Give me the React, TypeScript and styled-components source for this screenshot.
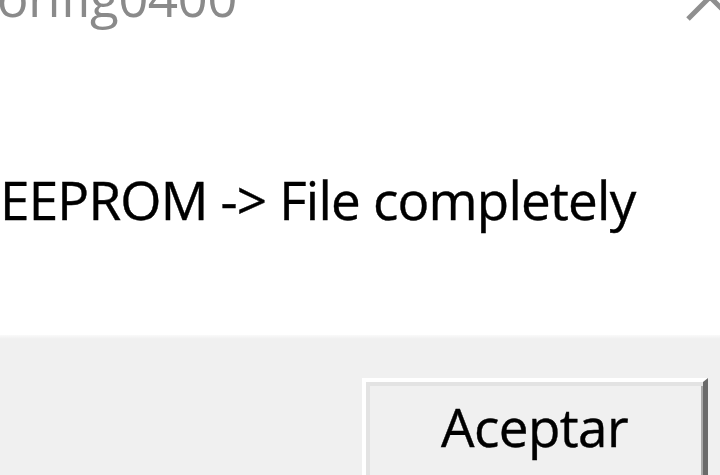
import React from "react";
import styled, { createGlobalStyle } from "styled-components";

const Global = createGlobalStyle`
  html, body {
    margin: 0;
    padding: 0;
    width: 720px;
    height: 475px;
    overflow: hidden;
    background: #ffffff;
  }
  #root {
    width: 720px;
    height: 475px;
    overflow: hidden;
  }
`;

const Dialog = styled.div`
  display: flex;
  flex-direction: column;
  width: 720px;
  height: 475px;
  overflow: hidden;
  font-family: "Open Sans", "Noto Sans", sans-serif;
  font-size: 53px;
  line-height: 53px;
  letter-spacing: -0.6px;
  filter: blur(0.6px);
`;

const Content = styled.div`
  display: flex;
  flex-direction: column;
  flex: none;
  height: 335px;
  background: #ffffff;
`;

const TitleBar = styled.div`
  display: flex;
  justify-content: space-between;
  align-items: flex-start;
  height: 60px;
  margin-top: -30px;
`;

const Title = styled.span`
  color: #8a8a8a;
  margin-left: -36px;
  white-space: nowrap;
`;

const CloseIcon = styled.svg`
  flex: none;
  width: 50px;
  height: 50px;
  margin-top: 2px;
  margin-right: -15px;
`;

const Message = styled.p`
  margin: 143px 0 0 0;
  color: #000000;
  white-space: nowrap;
  letter-spacing: -0.8px;
  -webkit-text-stroke: 0.4px #000000;
`;

const Footer = styled.div`
  display: flex;
  justify-content: flex-end;
  align-items: flex-start;
  flex: 1;
  min-height: 0;
  overflow: hidden;
  padding: 43px 12px 0 0;
  background: linear-gradient(#fafafa 0px, #f0f0f0 4px, #f0f0f0 100%);
`;

const Button = styled.button`
  display: flex;
  justify-content: center;
  flex: none;
  width: 346px;
  height: 140px;
  padding: 18px 0 0;
  box-sizing: border-box;
  border-style: solid;
  border-width: 4px 5px 0 4px;
  border-color: #ffffff #6a6a6a #6a6a6a #ffffff;
  box-shadow: inset 4px 4px 0 #e3e3e3, inset -2px 0 0 #a8a8a8;
  background: #f0f0f0;
  color: #000000;
  font: inherit;
  letter-spacing: inherit;
  -webkit-text-stroke: 0.4px #000000;
`;

export default function App() {
  return (
    <>
      <Global />
      <Dialog>
        <Content>
          <TitleBar>
            <Title>Config0400</Title>
            <CloseIcon viewBox="0 0 50 50">
              <path
                d="M3 3 L47 47 M47 3 L3 47"
                stroke="#8f8f8f"
                strokeWidth="5"
                fill="none"
              />
            </CloseIcon>
          </TitleBar>
          <Message>EEPROM -&gt; File completely</Message>
        </Content>
        <Footer>
          <Button>Aceptar</Button>
        </Footer>
      </Dialog>
    </>
  );
}
